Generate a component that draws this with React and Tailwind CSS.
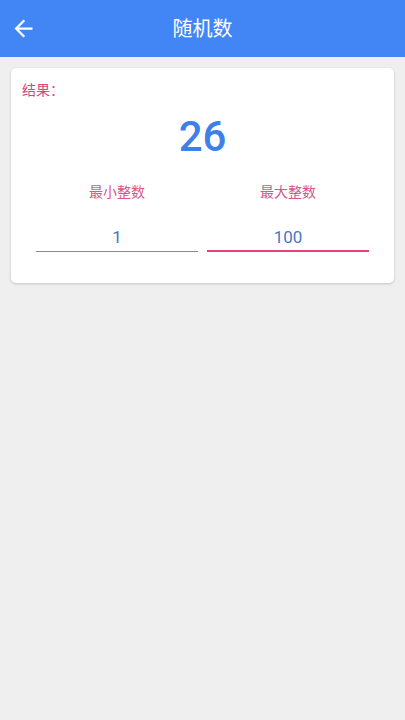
export default function App() {
  const font = { fontFamily: "Roboto, 'Noto Sans CJK SC', sans-serif" };
  return (
    <div className="w-[405px] h-[720px] bg-[#efefef] flex flex-col" style={font}>
      <div className="h-[57px] bg-[#4285f4] grid grid-cols-[57px_1fr_57px] items-center shrink-0">
        <div className="flex items-center pl-[10px]">
          <svg viewBox="0 0 24 24" className="w-[27px] h-[27px]" fill="#ffffff">
            <path d="M20 11H7.83l5.59-5.59L12 4l-8 8 8 8 1.41-1.41L7.83 13H20v-2z" />
          </svg>
        </div>
        <div className="text-center text-white text-[20px] leading-[28px]">随机数</div>
        <div />
      </div>
      <div className="mx-[11px] mt-[11px] bg-white rounded-[5px] shadow-[0_1px_3px_rgba(0,0,0,0.18)] pt-3 pb-[31px] flex flex-col">
        <div className="px-[11px] text-[14px] leading-[20px] text-[#d9467c]">结果：</div>
        <div className="mt-[13px] text-center text-[42px] leading-[48px] font-medium text-[#3f80e6]">26</div>
        <div className="mt-[21px] px-[25px] grid grid-cols-2 gap-[9px]">
          <div className="flex flex-col items-center">
            <div className="text-[14px] leading-[20px] text-[#d9558a]">最小整数</div>
            <div className="mt-[23px] w-full text-center text-[17px] leading-[24px] text-[#4a76c4] pb-[2px] border-b border-[#8a8a8a]">1</div>
          </div>
          <div className="flex flex-col items-center">
            <div className="text-[14px] leading-[20px] text-[#d9558a]">最大整数</div>
            <div className="mt-[23px] w-full text-center text-[17px] leading-[24px] text-[#4a76c4] pb-[1px] border-b-2 border-[#e0457b]">100</div>
          </div>
        </div>
      </div>
    </div>
  );
}
